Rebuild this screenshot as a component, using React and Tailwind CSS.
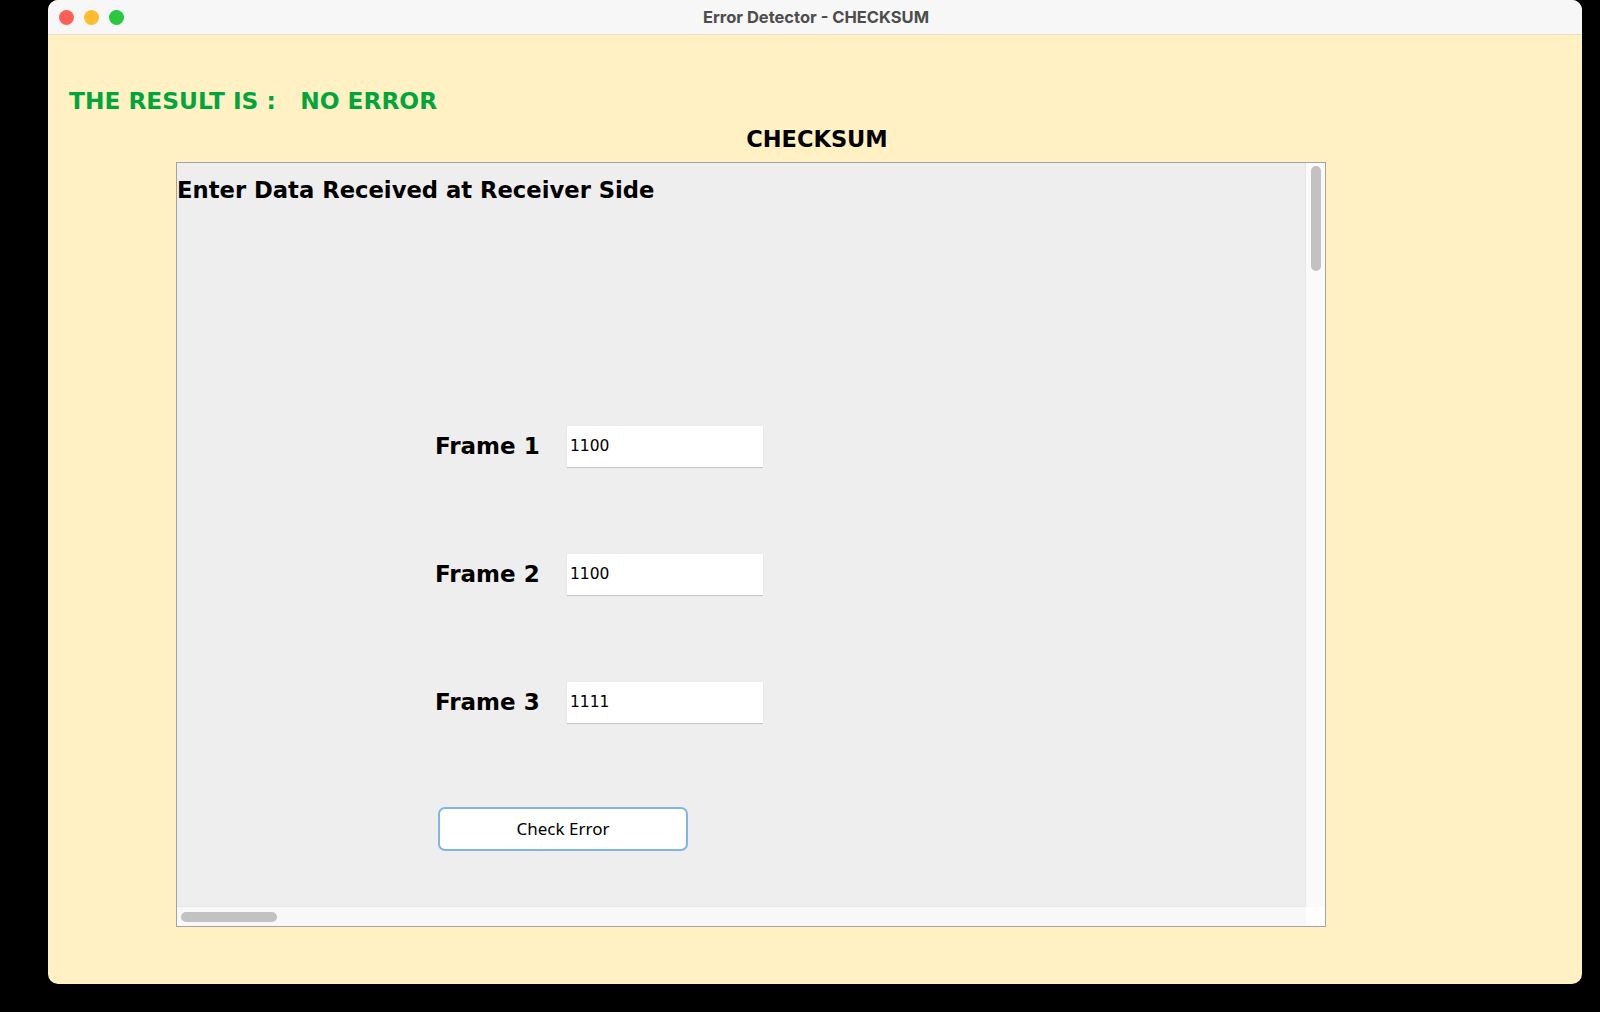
import React from "react";

function FrameRow({ label, value }) {
  return (
    <div className="flex items-center h-[41px]">
      <div className="w-[132px] text-[23px] font-bold text-black">
        <span className="font-['DejaVu_Sans',sans-serif]">{label}</span>
      </div>
      <div className="w-[196px] h-[41px] bg-white shadow-[0_1px_1px_rgba(0,0,0,0.15)] flex items-center pl-[3px]">
        <span className="font-['DejaVu_Sans',sans-serif] text-[15.5px] text-black">{value}</span>
      </div>
    </div>
  );
}

export default function App() {
  return (
    <div className="w-[1600px] h-[1012px] bg-black flex">
      <div className="ml-[48px] w-[1534px] h-[984px] rounded-[10px] overflow-hidden flex flex-col bg-[#fff1c4]">
        {/* title bar */}
        <div className="h-[35px] bg-[#f7f7f7] border-b border-[#e6dfc3] flex items-center relative shrink-0">
          <div className="flex items-center gap-[10px] pl-[11px]">
            <div className="w-[15px] h-[15px] rounded-full bg-[#ff5f57]" />
            <div className="w-[15px] h-[15px] rounded-full bg-[#febc2e]" />
            <div className="w-[15px] h-[15px] rounded-full bg-[#28c840]" />
          </div>
          <div className="absolute inset-0 flex items-center justify-center pl-[2px] pointer-events-none">
            <span className="font-['Inter',sans-serif] font-bold text-[16.5px] text-[#4d4d4d]">
              Error Detector - CHECKSUM
            </span>
          </div>
        </div>
        {/* content */}
        <div className="flex-1 flex flex-col font-['DejaVu_Sans',sans-serif]">
          <div className="pl-[21px] pt-[52px] h-[84px] text-[23.3px] font-bold text-[#00a63a] whitespace-pre leading-[28px]">
            THE RESULT IS :   NO ERROR
          </div>
          <div className="text-center text-[22.5px] font-bold text-black leading-[28px] h-[43px] pt-[6px] pl-[4px]">
            CHECKSUM
          </div>
          <div className="ml-[128px] w-[1150px] h-[765px] border border-[#a3a3a3] flex flex-col bg-[#fafafa]">
            <div className="flex flex-1 min-h-0">
              <div className="flex-1 bg-[#eeeeee] flex flex-col border-r border-[#e8e8e8] border-b">
                <div className="text-[22.7px] font-bold text-black leading-[28px] pt-[13px]">
                  Enter Data Received at Receiver Side
                </div>
                <div className="flex flex-col gap-[87px] pl-[258px] pt-[222px]">
                  <FrameRow label="Frame 1" value="1100" />
                  <FrameRow label="Frame 2" value="1100" />
                  <FrameRow label="Frame 3" value="1111" />
                </div>
                <div className="pl-[261px] pt-[84px]">
                  <button className="w-[250px] h-[44px] rounded-[7px] border-2 border-[#7fb5ec] bg-white font-['Noto_Sans',sans-serif] text-[17px] text-black">
                    Check Error
                  </button>
                </div>
              </div>
              <div className="w-[19px] bg-[#fafafa] flex justify-center pt-[3px]">
                <div className="w-[10px] h-[105px] rounded-full bg-[#c2c2c2]" />
              </div>
            </div>
            <div className="h-[19px] flex shrink-0">
              <div className="flex-1 bg-[#f8f8f8] flex items-center pl-[4px]">
                <div className="w-[96px] h-[10px] rounded-full bg-[#c2c2c2]" />
              </div>
              <div className="w-[19px] bg-white" />
            </div>
          </div>
        </div>
      </div>
    </div>
  );
}
